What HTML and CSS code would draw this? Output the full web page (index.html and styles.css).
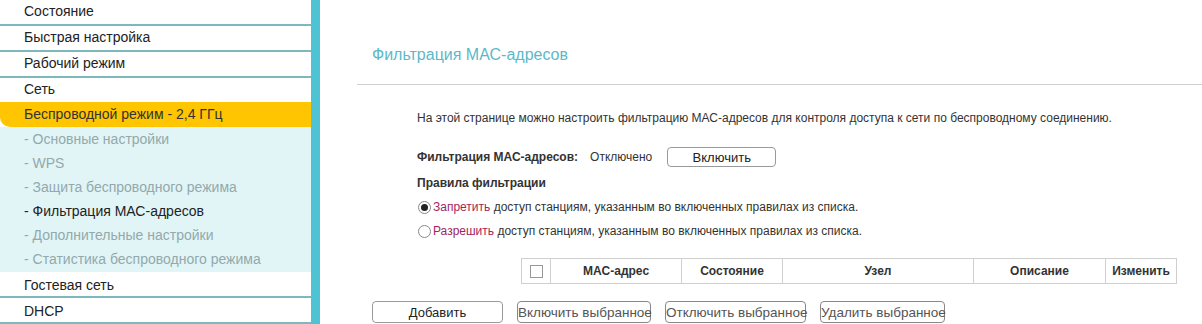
FILE: index.html
```html
<!DOCTYPE html>
<html lang="ru">
<head>
<meta charset="utf-8">
<link rel="stylesheet" href="styles.css">
</head>
<body>
<div class="page">
  <nav class="sidebar">
    <div class="item">Состояние</div>
    <div class="item">Быстрая настройка</div>
    <div class="item">Рабочий режим</div>
    <div class="item no-line">Сеть</div>
    <div class="item active">Беспроводной режим - 2,4 ГГц</div>
    <div class="submenu">
      <div class="sub">- Основные настройки</div>
      <div class="sub">- WPS</div>
      <div class="sub">- Защита беспроводного режима</div>
      <div class="sub current">- Фильтрация МАС-адресов</div>
      <div class="sub">- Дополнительные настройки</div>
      <div class="sub">- Статистика беспроводного режима</div>
    </div>
    <div class="item">Гостевая сеть</div>
    <div class="item">DHCP</div>
  </nav>
  <main class="main">
    <h1 class="title">Фильтрация МАС-адресов</h1>
    <div class="content">
      <p class="desc">На этой странице можно настроить фильтрацию МАС-адресов для контроля доступа к сети по беспроводному соединению.</p>
      <div class="status-row">
        <span class="label">Фильтрация МАС-адресов:</span>
        <span class="state">Отключено</span>
        <button class="btn btn-enable">Включить</button>
      </div>
      <div class="label rules">Правила фильтрации</div>
      <div class="radio-row"><span class="radio checked"></span><span class="accent">Запретить</span>&nbsp;доступ станциям, указанным во включенных правилах из списка.</div>
      <div class="radio-row"><span class="radio"></span><span class="accent">Разрешить</span>&nbsp;доступ станциям, указанным во включенных правилах из списка.</div>
      <table class="rules-table">
        <tr>
          <th class="c-check"><span class="checkbox"></span></th>
          <th class="c-mac">MAC-адрес</th>
          <th class="c-state">Состояние</th>
          <th class="c-node">Узел</th>
          <th class="c-desc">Описание</th>
          <th class="c-edit">Изменить</th>
        </tr>
      </table>
    </div>
    <div class="actions">
      <button class="btn btn-add">Добавить</button>
      <button class="btn btn-small w1">Включить выбранное</button>
      <button class="btn btn-small w2">Отключить выбранное</button>
      <button class="btn btn-small w3">Удалить выбранное</button>
    </div>
  </main>
</div>
</body>
</html>
```

FILE: styles.css
```css
* { box-sizing: border-box; }
html, body { margin: 0; padding: 0; background: #fff; }
body {
  font-family: "Liberation Sans", Arial, sans-serif;
  color: #333;
  width: 1202px;
  height: 324px;
  overflow: hidden;
}
.page { display: flex; align-items: flex-start; }

.sidebar {
  width: 320px;
  flex: none;
  border-right: 9px solid #4ec3d4;
  min-height: 324px;
  font-size: 14px;
}
.item {
  height: 26px;
  line-height: 23px;
  padding-left: 24px;
  border-bottom: 2px solid #7cb8bc;
  color: #222;
  background: #fff;
}
.item.no-line { border-bottom: none; height: 24px; }
.item.active {
  height: 25px;
  line-height: 25px;
  background: #ffc500;
  border-bottom: none;
  border-bottom-left-radius: 10px;
  color: #333;
}
.submenu {
  background: #e1f5f7;
  padding-bottom: 1px;
}
.sub {
  height: 24px;
  line-height: 24px;
  padding-left: 24px;
  color: #93a9ab;
}
.sub.current { color: #222; }
.submenu ~ .item { line-height: 26px; }

.main {
  flex: 1;
  min-width: 0;
  padding-top: 45px;
  padding-left: 37px;
}
.title {
  margin: 0;
  padding-left: 15px;
  font-size: 16px;
  font-weight: normal;
  line-height: 20px;
  color: #5cb9c9;
  height: 39px;
  border-bottom: 1px solid #d0d0d0;
  box-sizing: content-box;
}
.content {
  padding-left: 60px;
  font-size: 12px;
}
.desc {
  margin: 25px 0 0;
  line-height: 16px;
}
.status-row {
  display: flex;
  align-items: center;
  margin-top: 21px;
  height: 20px;
}
.label { font-weight: bold; }
.state { margin-left: 12px; }
.btn {
  font-family: "Liberation Sans", Arial, sans-serif;
  background: #fff;
  border: 1px solid #9a9a9a;
  border-radius: 4px;
  color: #222;
  padding: 0;
  margin: 0;
  white-space: nowrap;
}
.btn-enable {
  margin-left: 15px;
  width: 109px;
  height: 20px;
  font-size: 13px;
}
.rules {
  margin-top: 8px;
  line-height: 16px;
}
.radio-row {
  display: flex;
  align-items: center;
  height: 24px;
}
.rules + .radio-row { margin-top: 4px; }
.radio {
  width: 13px;
  height: 13px;
  border: 1px solid #888;
  border-radius: 50%;
  margin-left: 1px;
  margin-right: 2px;
  display: inline-flex;
  align-items: center;
  justify-content: center;
  background: #fff;
}
.radio.checked::after {
  content: "";
  width: 7px;
  height: 7px;
  border-radius: 50%;
  background: #222;
}
.accent { color: #a3255d; }

.rules-table {
  margin-top: 15px;
  margin-left: 104px;
  border-collapse: collapse;
  width: 655px;
  table-layout: fixed;
}
.rules-table th {
  border: 1px solid #cfcfcf;
  height: 25px;
  padding: 0;
  font-size: 12px;
  font-weight: bold;
  color: #333;
  text-align: center;
}
.c-check { width: 29px; }
.c-mac { width: 131px; }
.c-state { width: 101px; }
.c-node { width: 191px; }
.c-desc { width: 132px; }
.c-edit { width: 71px; }
.checkbox {
  display: inline-block;
  width: 13px;
  height: 13px;
  border: 1px solid #999;
  vertical-align: middle;
  background: #fff;
}

.actions {
  display: flex;
  gap: 14px;
  margin-top: 17px;
  padding-left: 15px;
}
.btn-add {
  width: 131px;
  height: 22px;
  font-size: 13px;
}
.btn-small {
  height: 22px;
  font-size: 13.5px;
  color: #555;
  border-color: #888;
}
.w1 { width: 134px; }
.w2 { width: 141px; }
.w3 { width: 125px; }
```
